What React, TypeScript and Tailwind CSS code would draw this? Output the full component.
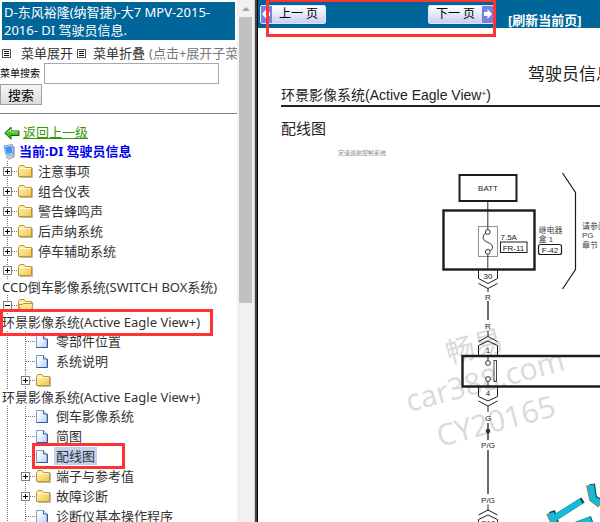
import React, { useState } from 'react';

interface TreeNode {
  label: string;
  // long labels break onto their own line below the folder
  wrapped?: boolean;
  open?: boolean;
  selected?: boolean;
  marked?: boolean;
  children?: TreeNode[];
}

const tree: TreeNode[] = [
  { label: '注意事项', children: [] },
  { label: '组合仪表', children: [] },
  { label: '警告蜂鸣声', children: [] },
  { label: '后声纳系统', children: [] },
  { label: '停车辅助系统', children: [] },
  { label: 'CCD倒车影像系统(SWITCH BOX系统)', wrapped: true, children: [] },
  {
    label: '环景影像系统(Active Eagle View+)',
    wrapped: true,
    open: true,
    marked: true,
    children: [
      { label: '零部件位置' },
      { label: '系统说明' },
      { label: '环景影像系统(Active Eagle View+)', wrapped: true, children: [] },
      { label: '倒车影像系统' },
      { label: '简图' },
      { label: '配线图', selected: true, marked: true },
      { label: '端子与参考值', children: [] },
      { label: '故障诊断', children: [] },
      { label: '诊断仪基本操作程序' },
    ],
  },
];

const FolderIcon = ({ open }: { open?: boolean }) => (
  <svg width="16" height="16" viewBox="0 0 16 16" className="shrink-0">
    <defs>
      <linearGradient id="folder" x1="0" y1="0" x2="1" y2="1">
        <stop offset="0" stopColor="#fff6c0" />
        <stop offset="1" stopColor="#f2c649" />
      </linearGradient>
    </defs>
    <path d="M2 14.5h12.5V5" fill="none" stroke="#b9b9b9" strokeWidth="1" />
    <path d="M.5 13.5V4.5l1.500-2h4l1.500 2h6v9z" fill="url(#folder)" stroke="#c09425" />
    <path d="M1.500 5.500h11.500" stroke="#fffbe0" />
    {open && <path d="M2.500 13.500L.5 7.500h4l1-1h9.500l-1.500 7z" fill="#ffe68a" stroke="#c09425" />}
  </svg>
);

const FileIcon = () => (
  <svg width="16" height="16" viewBox="0 0 16 16" className="shrink-0">
    <defs>
      <linearGradient id="file" x1="0" y1="0" x2="1" y2="1">
        <stop offset="0.2" stopColor="#ffffff" />
        <stop offset="1" stopColor="#b7d0f5" />
      </linearGradient>
    </defs>
    <path d="M.5 2.500h7l3.500 3.500v8.500H.5z" fill="url(#file)" stroke="#7f9ccc" />
    <path d="M7.500 2.500v3.500H11" fill="#dfeafc" stroke="#3f62a5" />
    <path d="M.5 14.500H11.500V6" fill="none" stroke="#33569c" />
  </svg>
);

const MenuIcon = () => (
  <svg width="9" height="9" viewBox="0 0 9 9" className="shrink-0">
    <rect x=".5" y=".5" width="8" height="8" fill="#fff" stroke="#555" />
    <path d="M2 2.500h5M2 4.500h5M2 6.500h5" stroke="#111" />
  </svg>
);

const BackIcon = () => (
  <svg width="16" height="14" viewBox="0 0 16 14" className="shrink-0">
    <path d="M.8 7L7 1.200V5h8v4.500H7v3.800z" fill="#3fc41a" stroke="#0d5c06" />
    <path d="M3 6.800L6.500 3.500V6h7.500" fill="none" stroke="#b4f08c" />
  </svg>
);

const ComputerIcon = () => (
  <svg width="14" height="16" viewBox="0 0 14 16" className="shrink-0">
    <path d="M9.500 2l2 1v9l-2 2z" fill="#9db4d6" stroke="#8d9fbc" strokeWidth=".6" />
    <path d="M1 2l8.500-1.500 1 9L3 11z" fill="#d6e6fb" stroke="#5d80bd" strokeWidth=".8" />
    <path d="M2.200 3l6.300-1 .8 6.700L3.700 9.700z" fill="#3d93ee" />
    <path d="M3 13l4-1.800 3.500 1.800-4.500 2.500z" fill="#c9cfd8" stroke="#808790" strokeWidth=".6" />
  </svg>
);

const BranchLine = ({ toggle, open }: { toggle?: boolean; open?: boolean }) => (
  <svg width="18" height="20" viewBox="0 0 18 20" className="block shrink-0">
    <path d="M7.500 0v20M8 10.500h10" stroke="#777" strokeDasharray="1 1" fill="none" />
    {toggle && (
      <>
        <rect x="3.500" y="6.500" width="8" height="8" fill="#fff" stroke="#808080" />
        <path d={open ? 'M5 10.500h5' : 'M5 10.500h5M7.500 8v5'} stroke="#000" />
      </>
    )}
  </svg>
);

const GuideLine = () => (
  <svg width="18" height="20" viewBox="0 0 18 20" className="block shrink-0">
    <path d="M7.500 0v20" stroke="#777" strokeDasharray="1 1" />
  </svg>
);

const Mark = ({ className }: { className: string }) => (
  <span className={`pointer-events-none absolute z-10 border-[3px] border-[#ff3333] ${className}`} />
);

const TreeItem = ({ node, depth }: { node: TreeNode; depth: number }) => {
  const [open, setOpen] = useState(!!node.open);
  const isFolder = !!node.children;

  return (
    <li>
      <div className={`relative flex items-center overflow-visible ${node.wrapped ? 'h-[18px]' : 'h-5'}`}>
        {depth > 0 && <GuideLine />}
        {isFolder ? (
          <button type="button" aria-label={node.label} aria-expanded={open} onClick={() => setOpen(!open)}>
            <BranchLine toggle open={open} />
          </button>
        ) : (
          <BranchLine />
        )}
        {isFolder ? <FolderIcon open={open} /> : <FileIcon />}
        {!node.wrapped && (
          <a
            href="#"
            className={`ml-0.5 whitespace-nowrap px-0.5 leading-[18px] ${node.selected ? 'bg-[#c0d2ec]' : ''}`}
          >
            {node.label}
          </a>
        )}
        {node.marked && !node.wrapped && <Mark className="-top-[3px] left-8 h-[26px] w-[93px]" />}
      </div>
      {node.wrapped && (
        <div className="relative h-[17px] bg-white pl-0.5 leading-[17px]">
          <a href="#" className="whitespace-nowrap">{node.label}</a>
          {node.marked && <Mark className="-top-[5px] left-0 h-[27px] w-[213px]" />}
        </div>
      )}
      {open && node.children && node.children.length > 0 && (
        <ul>
          {node.children.map((child) => (
            <TreeItem key={child.label} node={child} depth={depth + 1} />
          ))}
        </ul>
      )}
    </li>
  );
};

const Sidebar = () => {
  const [keyword, setKeyword] = useState('');

  return (
    <aside className="flex w-[258px] shrink-0">
      <div className="min-w-0 flex-1 overflow-hidden text-[13px] text-[#333]">
        <h1 className="mx-0.5 mt-0.5 bg-[#006699] px-0.5 py-px leading-[18px] text-white">
          D-东风裕隆(纳智捷)-大7 MPV-2015-2016- DI 驾驶员信息.
        </h1>
        <div className="flex items-center whitespace-nowrap pl-0.5 pt-1 leading-[19px]">
          <MenuIcon />
          <a href="#" className="ml-2.5 shrink-0">菜单展开</a>
          <span className="w-1 shrink-0" />
          <MenuIcon />
          <a href="#" className="ml-[7px] shrink-0">菜单折叠</a>
          <span className="ml-1 text-[#777]">(点击+展开子菜单)</span>
        </div>
        <form onSubmit={(e) => e.preventDefault()}>
          <div className="flex items-center">
            <label htmlFor="keyword" className="w-11 shrink-0 whitespace-nowrap text-[10px] text-black">
              菜单搜索
            </label>
            <input
              id="keyword"
              value={keyword}
              onChange={(e) => setKeyword(e.target.value)}
              className="h-[21px] w-[175px] border border-[#a9a9a9] bg-white px-1 text-xs"
            />
          </div>
          <button
            type="submit"
            className="block h-[21px] w-[42px] border border-[#a0a0a0] bg-gradient-to-b from-[#f6f6f6] to-[#dcdcdc] leading-[18px] text-black"
          >
            搜索
          </button>
        </form>
        <hr className="mt-2 border-[#808080]" />
        <div className="mt-[9px] flex items-center pl-1 leading-[19px]">
          <BackIcon />
          <a href="#" className="ml-[3px] text-[#339900] underline">返回上一级</a>
        </div>
        <div className="flex items-center gap-0.5 pl-[3px] font-bold leading-[19px] text-[#0000ee]">
          <ComputerIcon />
          <span>当前:DI 驾驶员信息</span>
        </div>
        <ul>
          {tree.map((node) => (
            <TreeItem key={node.label} node={node} depth={0} />
          ))}
        </ul>
      </div>

      {/* Scrollbar */}
      <div className="flex w-[17px] flex-col items-center bg-[#f1f1f1]">
        <svg width="8" height="17" viewBox="0 0 8 17">
          <path d="M0 11l4-4 4 4z" fill="#a3a3a3" />
        </svg>
        <div className="h-[286px] w-[13px] bg-[#c1c1c1]" />
      </div>
      {/* Frame divider */}
      <div className="w-1 border-l border-r border-l-[#d0d0d0] border-r-black bg-[#444]" />
    </aside>
  );
};

const PagerArrow = ({ flip }: { flip?: boolean }) => (
  <svg width="11" height="18" viewBox="0 0 11 18" className={`shrink-0 ${flip ? 'rotate-180' : ''}`}>
    <rect width="11" height="18" fill="#7b7fe0" />
    <path d="M1 9l4.500-5v3H9v4H5.500v3z" fill="#fff" />
  </svg>
);

const pagerClass =
  'flex h-[19px] w-[66px] items-center overflow-hidden rounded-xs border border-[#dfe3ff] bg-gradient-to-b from-white to-[#c9cff0] text-xs text-black';

const Toolbar = () => (
  <header className="relative flex h-7 items-center bg-[#006699] pl-0.5">
    <button type="button" className={pagerClass}>
      <PagerArrow />
      <span className="flex-1 whitespace-nowrap text-center leading-4">上一 页</span>
    </button>
    <button type="button" className={`ml-[102px] ${pagerClass}`}>
      <span className="flex-1 whitespace-nowrap text-center leading-4">下一 页</span>
      <PagerArrow flip />
    </button>
    <a href="#" className="ml-3.5 self-end whitespace-nowrap text-[13px] font-bold leading-4 text-white">
      [刷新当前页]
    </a>
    <Mark className="-top-px left-2 h-[38px] w-[230px]" />
  </header>
);

const WiringDiagram = () => (
  <svg
    width="442"
    height="357"
    viewBox="258 165 442 357"
    className="block shrink-0 font-['Liberation_Sans','Noto_Sans_CJK_SC',sans-serif]"
  >
    {/* Watermark */}
    <g fill="#dadada" className="font-['Open_Sans','Noto_Sans_CJK_SC',sans-serif]">
      <text transform="translate(449 363) rotate(-15)" fontSize="29">畅易</text>
      <text transform="translate(409 411) rotate(-15)" fontSize="30">car388.com</text>
      <text transform="translate(440 446) rotate(-15)" fontSize="30">CY20165</text>
    </g>

    <g fill="none" stroke="#1c1c1c">
      {/* Boxes */}
      <rect x="459.500" y="174" width="57" height="26" strokeWidth="2" />
      <rect x="443.500" y="209.500" width="91" height="59" strokeWidth="2.400" />
      <path d="M700 355H462.500v30.500H700" strokeWidth="2.400" />
      <rect x="500.500" y="241" width="26.500" height="10.500" />
      <rect x="538.500" y="243.500" width="23" height="10" rx="2" strokeWidth="1.200" />
      <path d="M562.500 172l13 19.500v77l-13 19.500" strokeWidth="1.200" />

      {/* Fuse */}
      <rect x="478.500" y="225.500" width="19" height="30" stroke="#777" strokeWidth=".8" />
      <g strokeWidth=".9">
        <path d="M487.800 200.500v28M487.800 253.500v14" />
        <circle cx="487.800" cy="231" r="2.400" />
        <circle cx="487.800" cy="250.800" r="2.400" />
        <path d="M485.500 232c-4.500 4-2 8 2.500 9.500s6 5 2.500 8.500" />
      </g>

      {/* Connectors */}
      <path d="M478.500 269v8.500l9.500 5 9.500-5V269" />
      <path d="M478.500 282.500l9.500 5 9.500-5M488 287.500v3.500" />
      <path d="M478.500 340.500l9.500-5 9.500 5M488 330v5.500" />
      <path d="M478.500 354v-9.500l9.500-4.500 9.500 4.500v9.500" />
      <path d="M478.500 386v9.500l9.500 4.500 9.500-4.500V386" />
      <path d="M478.500 400l9.500 5 9.500-5M488 405v6" />
      <path d="M478.500 514l9.500-5 9.500 5M488 503.500v6" />
      <path d="M478.500 522v-3.500l9.500-4.500 9.500 4.500v3.500" />

      {/* Wires */}
      <path d="M488 300v19M488 422v17M488 449v44" strokeWidth="1.300" />
      <path d="M488 356v3.500M488 380.500v5" />
      <circle cx="488" cy="362" r="2.400" strokeWidth=".9" fill="#fff" />
      <circle cx="488" cy="378" r="2.400" strokeWidth=".9" fill="#fff" />
      <rect x="494" y="359.500" width="2.500" height="21" strokeWidth=".8" />
    </g>
    <circle cx="488" cy="430" r="2.300" fill="#333" />

    <g fill="#222" fontSize="8" textAnchor="middle">
      <text x="488" y="190">BATT</text>
      <text x="513.500" y="249.500">FR-11</text>
      <text x="550" y="251.500">F-42</text>
      <text x="488" y="278">30</text>
      <text x="488" y="299">R</text>
      <text x="488" y="328">R</text>
      <text x="488" y="352">1</text>
      <text x="488" y="395">4</text>
      <text x="488" y="420">G</text>
      <text x="488" y="447">P/G</text>
      <text x="488" y="502">P/G</text>
      <text x="488" y="525">C10</text>
    </g>
    <g fill="#444" fontSize="8">
      <text x="500.500" y="239" fill="#222">7.5A</text>
      <text x="538.500" y="232">继电器</text>
      <text x="538.500" y="241">盒 1</text>
      <text x="582" y="228">请参阅</text>
      <text x="582" y="237">PG</text>
      <text x="582" y="247">章节</text>
    </g>

    {/* Stamp */}
    <g strokeLinejoin="miter" fill="none">
      <g stroke="#8f8577" strokeWidth="6">
        <path d="M549 512l5 11M552 519l29-19M568 527l23-9M589 484l3 14 8 6" />
      </g>
      <g stroke="#174650" strokeWidth="6">
        <path d="M552 510l4 12M554 517l29-18M570 526l22-8M592 483l2 14 7 4" />
      </g>
      <g stroke="#12bcd6" strokeWidth="6">
        <path d="M551 512l4 12M553 518l28-18M569 527l22-9M591 484l2 14 8 4" />
      </g>
    </g>
  </svg>
);

const Manual = () => (
  <article className="min-w-0 flex-1 overflow-hidden text-[#222]">
    <div className="pl-[23px] pt-9 font-['Liberation_Sans','Noto_Sans_CJK_SC',sans-serif]">
      <h2 className="ml-[247px] whitespace-nowrap text-[17px] leading-[22px]">驾驶员信息</h2>
      <h3 className="whitespace-nowrap border-b-2 border-[#222] pb-px text-[14px] leading-[18px]">
        环景影像系统(Active Eagle View<sup className="text-[8px]">+</sup>)
      </h3>
      <h4 className="mt-[11px] text-[15px] leading-[22px]">配线图</h4>
      <p className="ml-[57px] mt-[7px] text-[6px] leading-3 text-[#888]">定速巡航控制系统</p>
    </div>
    <div className="mt-[7px] overflow-hidden">
      <WiringDiagram />
    </div>
  </article>
);

export default function App() {
  return (
    <div className="flex h-screen overflow-hidden bg-white font-['Noto_Sans','Noto_Sans_CJK_SC',sans-serif]">
      <Sidebar />
      <main className="flex min-w-0 flex-1 flex-col overflow-hidden">
        <Toolbar />
        <Manual />
      </main>
    </div>
  );
}
